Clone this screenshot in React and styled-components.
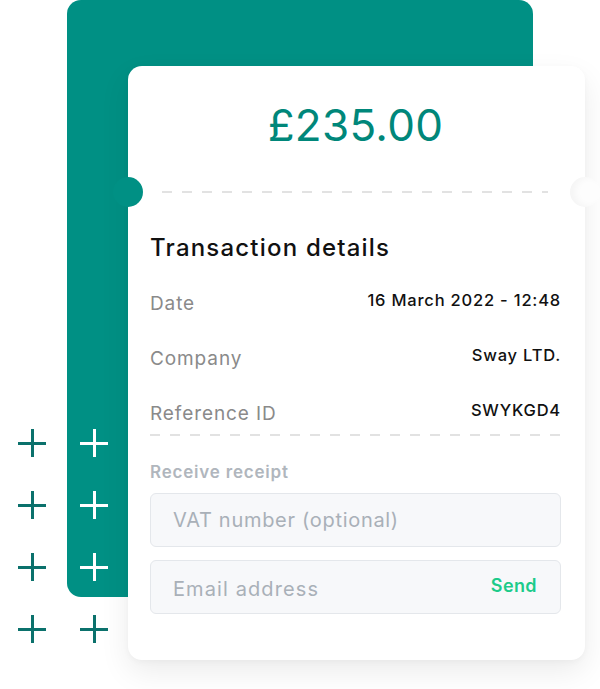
import React from "react";
import styled, { createGlobalStyle } from "styled-components";

const Global = createGlobalStyle`
  html, body { margin: 0; padding: 0; background: #ffffff; }
  body { font-family: "Inter", "Open Sans", sans-serif; }
  * { box-sizing: border-box; }
`;

const TEAL = "#009084";

const Stage = styled.div`
  position: relative;
  width: 600px;
  height: 689px;
  overflow: hidden;
  padding-left: 67px;
`;

const TealPanel = styled.div`
  width: 466px;
  height: 597px;
  background: ${TEAL};
  border-radius: 14px;
  padding: 66px 0 0 61px;
`;

const Card = styled.div`
  position: relative;
  width: 457px;
  height: 594px;
  background: #ffffff;
  border-radius: 14px;
  box-shadow: 0 12px 30px rgba(0, 0, 0, 0.08), 0 2px 6px rgba(0, 0, 0, 0.03);
  padding: 0 24px 0 22px;
  display: flex;
  flex-direction: column;
`;

const Notch = styled.div`
  position: absolute;
  top: 111px;
  ${(p) => (p.$side === "left" ? "left: -15px;" : "right: -15px;")}
  width: 30px;
  height: 30px;
  border-radius: 50%;
  background: ${(p) => (p.$side === "left" ? TEAL : "#fdfdfd")};
  box-shadow: ${(p) =>
    p.$side === "left" ? "none" : "inset 5px 0 7px rgba(0,0,0,0.035)"};
`;

const AmountSection = styled.div`
  height: 125px;
  display: flex;
  align-items: center;
  justify-content: center;
  padding-bottom: 8px;
`;

const Amount = styled.div`
  font-size: 44px;
  font-weight: 400;
  color: #00877a;
  letter-spacing: 0.3px;
`;

const Dashed = styled.div`
  height: 2px;
  margin: ${(p) => p.$margin || "0"};
  background: repeating-linear-gradient(
    to right,
    #e2e2e2 0 10px,
    transparent 10px 20px
  );
`;

const Title = styled.h2`
  margin: 41px 0 0 0;
  font-size: 24px;
  font-weight: 500;
  color: #111111;
  line-height: 28px;
  letter-spacing: 1.2px;
`;

const Rows = styled.div`
  margin-top: 28px;
  display: flex;
  flex-direction: column;
  gap: 31px;
`;

const Row = styled.div`
  display: flex;
  justify-content: space-between;
  align-items: flex-start;
  height: 24px;
`;

const Label = styled.span`
  font-size: 19px;
  color: #8a8a8a;
  line-height: 24px;
  margin-top: 2px;
  letter-spacing: 0.9px;
`;

const Value = styled.span`
  font-size: 16.5px;
  font-weight: 500;
  color: #111111;
  line-height: 20px;
  letter-spacing: 0.8px;
`;

const SectionLabel = styled.div`
  margin-top: 25px;
  font-size: 17px;
  font-weight: 600;
  color: #b0b6bd;
  line-height: 22px;
  letter-spacing: 0.8px;
`;

const Field = styled.div`
  height: 54px;
  margin-top: ${(p) => p.$mt || "0"};
  border: 1px solid #e4e7eb;
  border-radius: 6px;
  background: #f7f8fa;
  display: flex;
  align-items: center;
  justify-content: space-between;
  padding: 0 23px 0 22px;
`;

const Placeholder = styled.span`
  font-size: 20px;
  color: #a9b0b8;
  letter-spacing: ${(p) => p.$ls || "0.7px"};
  margin-top: ${(p) => p.$mt || "0"};
`;

const SendButton = styled.span`
  font-size: 18px;
  font-weight: 600;
  color: #1ccb8a;
  letter-spacing: 0.4px;
  margin-top: -4px;
`;

const PlusGrid = styled.div`
  position: absolute;
  left: 18px;
  top: 429px;
  display: grid;
  grid-template-columns: 28px 28px;
  column-gap: 34px;
  row-gap: 34px;
`;

const Plus = styled.div`
  position: relative;
  width: 28px;
  height: 28px;
  &::before,
  &::after {
    content: "";
    position: absolute;
    background: ${(p) => (p.$light ? "#ffffff" : "#0b716c")};
  }
  &::before {
    left: 0;
    right: 0;
    top: 13px;
    height: 2.5px;
  }
  &::after {
    top: 0;
    bottom: 0;
    left: 13px;
    width: 2.5px;
  }
`;

const details = [
  ["Date", "16 March 2022 - 12:48"],
  ["Company", "Sway LTD."],
  ["Reference ID", "SWYKGD4"],
];

export default function App() {
  return (
    <>
      <Global />
      <Stage>
        <TealPanel>
          <Card>
            <Notch $side="left" />
            <Notch $side="right" />
            <AmountSection>
              <Amount>£235.00</Amount>
            </AmountSection>
            <Dashed $margin="0 13px 0 12px" />
            <Title>Transaction details</Title>
            <Rows>
              {details.map(([l, v]) => (
                <Row key={l}>
                  <Label>{l}</Label>
                  <Value>{v}</Value>
                </Row>
              ))}
            </Rows>
            <Dashed $margin="10px 0 0 0" />
            <SectionLabel>Receive receipt</SectionLabel>
            <Field $mt="10px">
              <Placeholder>VAT number (optional)</Placeholder>
            </Field>
            <Field $mt="13px">
              <Placeholder $mt="4px" $ls="1.1px">Email address</Placeholder>
              <SendButton>Send</SendButton>
            </Field>
          </Card>
        </TealPanel>
        <PlusGrid>
          {[0, 1, 2, 3].map((r) => (
            <React.Fragment key={r}>
              <Plus />
              <Plus $light={r < 3} />
            </React.Fragment>
          ))}
        </PlusGrid>
      </Stage>
    </>
  );
}
